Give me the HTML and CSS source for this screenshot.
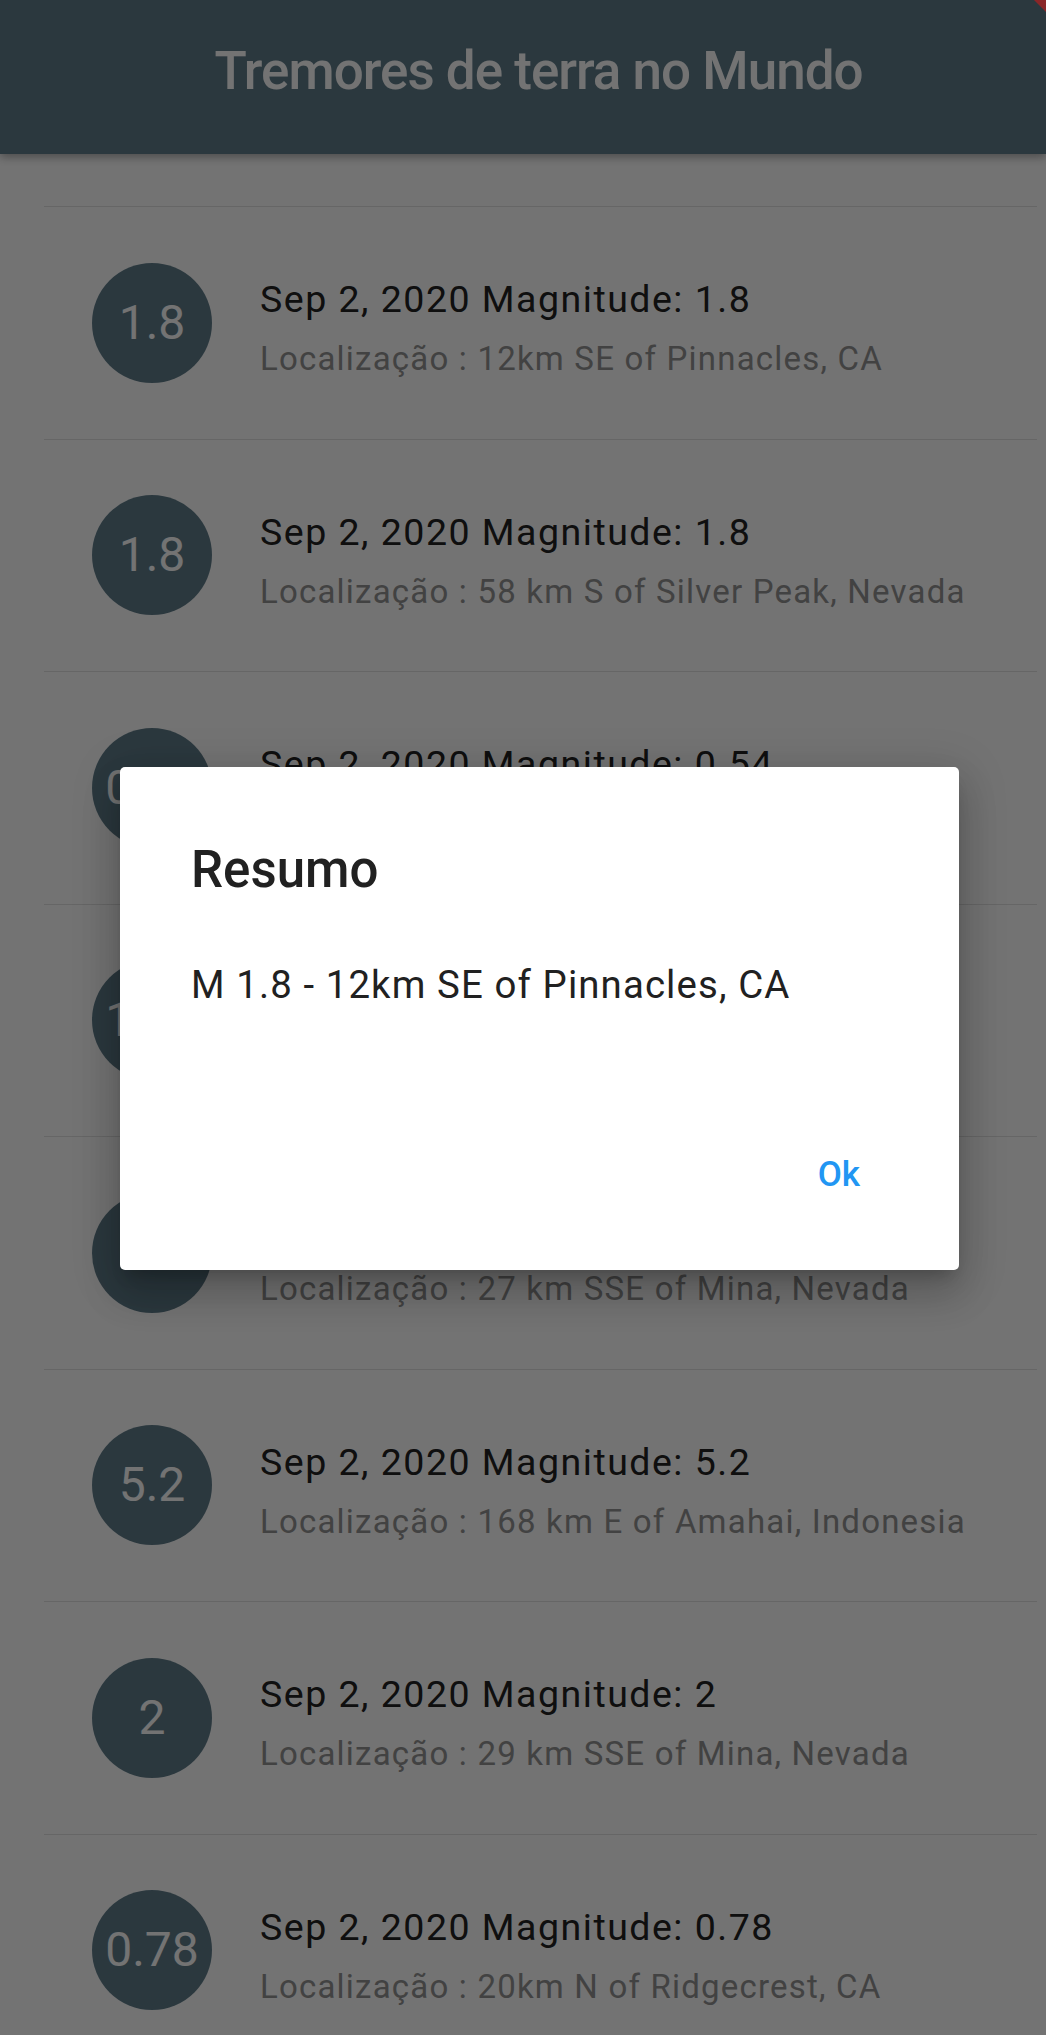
FILE: index.html
```html
<!DOCTYPE html>
<html lang="pt">
<head>
<meta charset="utf-8">
<title>Tremores de terra no Mundo</title>
<link rel="stylesheet" href="styles.css">
</head>
<body>
<div class="app">
  <header class="appbar">
    <h1 class="appbar-title">Tremores de terra no Mundo</h1>
  </header>
  <ul class="quake-list">
    <li class="quake">
      <div class="mag">1.8</div>
      <div class="info">
        <div class="info-title">Sep 2, 2020 Magnitude: 1.8</div>
        <div class="info-sub">Localização : 12km SE of Pinnacles, CA</div>
      </div>
    </li>
    <li class="quake">
      <div class="mag">1.8</div>
      <div class="info">
        <div class="info-title">Sep 2, 2020 Magnitude: 1.8</div>
        <div class="info-sub">Localização : 58 km S of Silver Peak, Nevada</div>
      </div>
    </li>
    <li class="quake">
      <div class="mag">0.54</div>
      <div class="info">
        <div class="info-title">Sep 2, 2020 Magnitude: 0.54</div>
        <div class="info-sub">Localização : 6km NW of The Geysers, CA</div>
      </div>
    </li>
    <li class="quake">
      <div class="mag">1.25</div>
      <div class="info">
        <div class="info-title">Sep 2, 2020 Magnitude: 1.25</div>
        <div class="info-sub">Localização : 8km E of Anza, CA</div>
      </div>
    </li>
    <li class="quake">
      <div class="mag">1.5</div>
      <div class="info">
        <div class="info-title">Sep 2, 2020 Magnitude: 1.5</div>
        <div class="info-sub">Localização : 27 km SSE of Mina, Nevada</div>
      </div>
    </li>
    <li class="quake">
      <div class="mag">5.2</div>
      <div class="info">
        <div class="info-title">Sep 2, 2020 Magnitude: 5.2</div>
        <div class="info-sub">Localização : 168 km E of Amahai, Indonesia</div>
      </div>
    </li>
    <li class="quake">
      <div class="mag">2</div>
      <div class="info">
        <div class="info-title">Sep 2, 2020 Magnitude: 2</div>
        <div class="info-sub">Localização : 29 km SSE of Mina, Nevada</div>
      </div>
    </li>
    <li class="quake">
      <div class="mag">0.78</div>
      <div class="info">
        <div class="info-title">Sep 2, 2020 Magnitude: 0.78</div>
        <div class="info-sub">Localização : 20km N of Ridgecrest, CA</div>
      </div>
    </li>
  </ul>
</div>

<div class="scrim"></div>

<div class="dialog" role="dialog">
  <h2 class="dialog-title">Resumo</h2>
  <p class="dialog-content">M 1.8 - 12km SE of Pinnacles, CA</p>
  <div class="dialog-actions">
    <button class="dialog-btn">Ok</button>
  </div>
</div>

<div class="debug-banner"></div>
</body>
</html>
```

FILE: styles.css
```css
html, body {
  margin: 0;
  padding: 0;
}

body {
  width: 1046px;
  height: 2035px;
  overflow: hidden;
  position: relative;
  background: #ffffff;
  font-family: Roboto, "Noto Sans", "Liberation Sans", sans-serif;
}

.app {
  width: 1046px;
  height: 2035px;
  overflow: hidden;
  display: flex;
  flex-direction: column;
}

.appbar {
  position: relative;
  z-index: 2;
  flex: 0 0 154px;
  height: 154px;
  box-sizing: border-box;
  background: #607d8b;
  box-shadow: 0 3px 9px rgba(0, 0, 0, 0.35);
  padding-top: 39px;
  padding-left: 31px;
  text-align: center;
}

.appbar-title {
  margin: 0;
  font-size: 53px;
  line-height: 64px;
  font-weight: 500;
  letter-spacing: -1px;
  color: #ffffff;
}

.quake-list {
  list-style: none;
  margin: 0;
  padding: 52px 0 0 0;
}

.quake {
  box-sizing: border-box;
  height: 232.5px;
  margin: 0 9px 0 44px;
  border-top: 1px solid #e2e2e2;
  display: flex;
  align-items: center;
}

.mag {
  flex: 0 0 120px;
  width: 120px;
  height: 120px;
  margin-left: 48px;
  border-radius: 50%;
  background: #607d8b;
  color: #ffffff;
  font-size: 48px;
  font-weight: 400;
  display: flex;
  align-items: center;
  justify-content: center;
  line-height: 1;
}

.info {
  margin-left: 48px;
  padding-top: 11px;
  display: flex;
  flex-direction: column;
}

.info-title {
  font-size: 37.5px;
  line-height: 44px;
  letter-spacing: 1.5px;
  color: #222222;
}

.info-sub {
  margin-top: 18px;
  font-size: 33px;
  line-height: 40px;
  letter-spacing: 1.2px;
  color: #939393;
}

.scrim {
  position: absolute;
  inset: 0;
  z-index: 10;
  background: rgba(0, 0, 0, 0.55);
}

.dialog {
  position: absolute;
  z-index: 11;
  left: 120px;
  top: 767px;
  width: 839px;
  height: 503px;
  box-sizing: border-box;
  background: #ffffff;
  border-radius: 5px;
  padding: 73px 99px 0 71px;
  box-shadow:
    0 24px 38px 3px rgba(0, 0, 0, 0.14),
    0 9px 46px 8px rgba(0, 0, 0, 0.12),
    0 11px 15px -7px rgba(0, 0, 0, 0.2);
  display: flex;
  flex-direction: column;
}

.dialog-title {
  margin: 0;
  font-size: 51px;
  line-height: 60px;
  font-weight: 500;
  color: #212121;
}

.dialog-content {
  margin: 62px 0 0 0;
  font-size: 38.4px;
  line-height: 45px;
  font-weight: 400;
  letter-spacing: 1.1px;
  color: #212121;
}

.dialog-actions {
  margin-top: 147px;
  display: flex;
  justify-content: flex-end;
}

.dialog-btn {
  border: 0;
  background: transparent;
  padding: 0;
  margin: 0;
  font-family: Roboto, "Noto Sans", "Liberation Sans", sans-serif;
  font-size: 35px;
  line-height: 41px;
  font-weight: 500;
  color: #2196f3;
}

.debug-banner {
  position: absolute;
  z-index: 20;
  top: 0;
  right: 0;
  width: 12px;
  height: 12px;
  background: #8a2628;
  clip-path: polygon(0 0, 100% 0, 100% 100%);
}
```
